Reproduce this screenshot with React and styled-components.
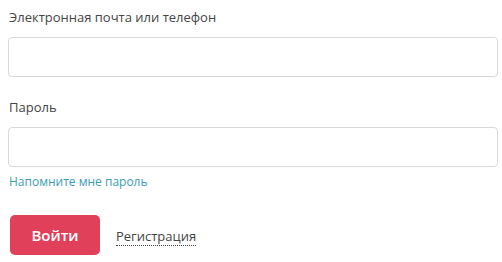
import React from 'react'
import styled, { createGlobalStyle } from 'styled-components'

const GlobalStyle = createGlobalStyle`
  body {
    margin: 0;
    background: #fff;
    font-family: "Open Sans", "Liberation Sans", sans-serif;
  }
`

export default function App() {
  return (
    <React.Fragment>
      <GlobalStyle />
      <Form onSubmit={e => e.preventDefault()}>
        <Field>
          <Label>Электронная почта или телефон</Label>
          <Input type="text" />
        </Field>
        <Field>
          <Label>Пароль</Label>
          <Input type="password" />
          <Remind href="#">Напомните мне пароль</Remind>
        </Field>
        <Actions>
          <Submit type="submit">Войти</Submit>
          <Register href="#">Регистрация</Register>
        </Actions>
      </Form>
    </React.Fragment>
  )
}

const Form = styled.form`
width:490px;
padding:7px 4px 0 8px;
display:flex;
flex-direction:column;
`

const Field = styled.div`
display:flex;
flex-direction:column;
margin-bottom:20px;
`

const Label = styled.label`
font-size:13px;
line-height:20px;
color:#444;
padding-left:1px;
margin-bottom:10px;
`

const Input = styled.input`
box-sizing:border-box;
width:100%;
height:40px;
border:1px solid #d8d8d8;
border-radius:4px;
outline:none;
font-family:inherit;
font-size:14px;
padding:0 10px;
`

const Remind = styled.a`
font-size:12px;
line-height:16px;
color:#3c9db5;
text-decoration:none;
margin-top:7px;
padding-left:1px;
`

const Actions = styled.div`
display:flex;
align-items:center;
gap:16px;
padding-left:2px;
margin-top:5px;
`

const Submit = styled.button`
width:90px;
height:40px;
border:none;
border-radius:5px;
background:#e1405b;
color:#fff;
font-family:inherit;
font-size:15px;
font-weight:600;
cursor:pointer;
`

const Register = styled.a`
font-size:13px;
line-height:18px;
color:#444;
text-decoration:none;
border-bottom:1px dotted #444;
margin-top:2px;
`
